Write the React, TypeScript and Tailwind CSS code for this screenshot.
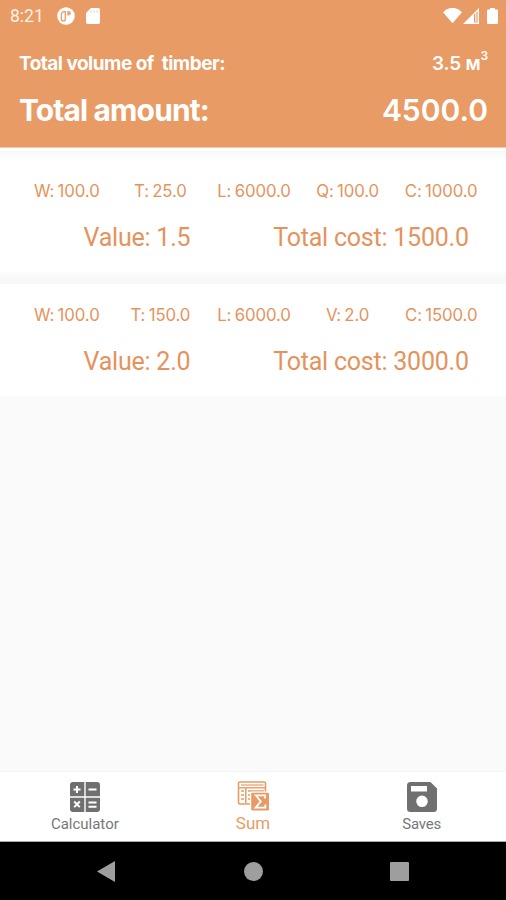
import React from "react";

type Entry = { cells: string[]; value: string; cost: string };

const entries: Entry[] = [
  { cells: ["W: 100.0", "T: 25.0", "L: 6000.0", "Q: 100.0", "C: 1000.0"], value: "Value: 1.5", cost: "Total cost: 1500.0" },
  { cells: ["W: 100.0", "T: 150.0", "L: 6000.0", "V: 2.0", "C: 1500.0"], value: "Value: 2.0", cost: "Total cost: 3000.0" },
];

function StatusBar() {
  return (
    <div className="flex h-8 items-center pl-[10px] pr-[8px]">
      <span className="w-[47px] font-['Roboto',sans-serif] text-[17.5px] leading-8 text-[#fff1e6]">8:21</span>
      <svg className="h-[18px] w-[18px]" viewBox="0 0 18 18">
        <circle cx="9" cy="9" r="8.8" fill="#fff" />
        <path d="M8.3 4.6H7a2.6 2.6 0 0 0-2.6 2.6V12a1.9 1.9 0 0 0 3.9 0z" fill="#fff" stroke="#e89b64" strokeWidth="1.3" />
        <path d="M10.2 4h1.4a2.3 2.3 0 0 1 0 4.6h-1.4z" fill="#eba878" />
      </svg>
      <svg className="ml-[11px] h-4 w-[14px]" viewBox="0 0 14 16">
        <path d="M5 0h7.3Q14 0 14 1.7v12.6q0 1.7-1.7 1.7H1.7Q0 16 0 14.3V5z" fill="#fff" />
        <path d="M5 2.5v2M8 2.5v2M11 2.5v2" stroke="#f3c5a3" strokeWidth="1" />
      </svg>
      <svg className="ml-auto h-4 w-[19px]" viewBox="0 0 19 16">
        <path d="M0 4.2Q4-.2 9.5-.2T19 4.2L9.5 15.2z" fill="#fff" />
      </svg>
      <svg className="ml-[1px] h-4 w-4" viewBox="0 0 16 16">
        <path d="M16 0v16H0z" fill="#fff" />
        <path d="M11 6.6l3.6-3v10.8H11z" fill="#e89b64" />
        <path d="M12.3 5h1.1v9h-1.1z" fill="#fff" />
      </svg>
      <svg className="ml-[8px] h-4 w-[11px]" viewBox="0 0 11 16">
        <path d="M3 0h5v1.6h2q1 0 1 1V15q0 1-1 1H1q-1 0-1-1V2.6q0-1 1-1h2z" fill="#fff" />
      </svg>
    </div>
  );
}

function EntryCard({ entry }: { entry: Entry }) {
  return (
    <section className="h-[112px] bg-white pl-[20px] pr-[18px] text-[#e5935c]">
      <div className="grid h-[62px] grid-cols-5 text-center font-['Inter',sans-serif] text-[16.8px] leading-[62px] tracking-[-0.1px] [word-spacing:-1.3px]">
        {entry.cells.map((c) => (
          <span key={c} className="whitespace-nowrap">{c}</span>
        ))}
      </div>
      <div className="grid grid-cols-2 text-center font-['Roboto',sans-serif] text-[25px] leading-[32px] tracking-[-0.22px]">
        <span>{entry.value}</span>
        <span className="whitespace-nowrap">{entry.cost}</span>
      </div>
    </section>
  );
}

function CalculatorIcon() {
  return (
    <svg className="h-[30px] w-[30px]" viewBox="0 0 30 30">
      <path d="M3 0h11.3v14.3H0V3q0-3 3-3zM15.7 0H27q3 0 3 3v11.3H15.7zM0 15.7h14.3V30H3q-3 0-3-3zM15.7 15.7H30V27q0 3-3 3H15.7z" fill="#707070" />
      <path d="M7 4v7M3.5 7.5h7M18.5 7.5h8M4.2 19.5l5.6 5.6M9.8 19.5l-5.6 5.6M18.5 20.5h8M18.5 24.7h8" stroke="#fff" strokeWidth="2" />
    </svg>
  );
}

function SumIcon() {
  return (
    <svg className="h-[30px] w-[32px]" viewBox="0 0 32 30">
      <rect x="1.5" y="1" width="27" height="22" rx="1.5" fill="#fff" stroke="#e89b64" strokeWidth="1.6" />
      <path d="M4 4h22.5" stroke="#efb58d" strokeWidth="1.6" />
      <path d="M2 6.8h26" stroke="#e89b64" strokeWidth="1.4" />
      <path d="M4 10h3M4 14h3M4 18h3M11 10h16M11 14h3M11 18h3M8.8 7v15" stroke="#e89b64" strokeWidth="1.5" />
      <rect x="13" y="10.6" width="19" height="19.4" rx="1" fill="#fff" />
      <rect x="14.2" y="11.8" width="17.8" height="17.8" rx="1" fill="#e89b64" />
      <path d="M28 17.4v-3h-9.2l5 6.1-5.2 6.1H28.4v-3" fill="none" stroke="#fff" strokeWidth="1.8" />
    </svg>
  );
}

function SaveIcon() {
  return (
    <svg className="h-[30px] w-[30px]" viewBox="0 0 30 30">
      <path fillRule="evenodd" d="M3.5 0h20L30 6.5v20q0 3.5-3.5 3.5h-23Q0 30 0 26.5v-23Q0 0 3.5 0zM4 4v5.5h16V4zM15 13.5a5.8 5.8 0 1 0 0 11.6 5.8 5.8 0 0 0 0-11.6z" fill="#707070" />
    </svg>
  );
}

export default function App() {
  return (
    <div className="flex h-[900px] w-[506px] flex-col overflow-hidden bg-[#fafafa]">
      <header className="h-[148px] border-b border-[#f3c9ab] bg-[#e89b64] font-['Inter',sans-serif] text-white">
        <StatusBar />
        <div className="flex h-[62px] items-center justify-between pl-[19px] pr-[18px] pt-[2px] text-[19px] font-bold leading-[60px]">
          <span className="whitespace-pre tracking-[-0.52px]">Total volume of  timber:</span>
          <span className="flex font-semibold tracking-[-0.2px]">3.5 м<span className="-translate-y-[8px] text-[12px]">3</span></span>
        </div>
        <div className="-mt-[1px] flex h-[34px] items-center justify-between pl-[19px] pr-[18px] text-[30px] font-bold">
          <span className="tracking-[-0.88px]">Total amount:</span>
          <span className="font-semibold">4500.0</span>
        </div>
      </header>
      <main className="flex-1">
        <div className="h-[3px] bg-white" />
        <div className="h-[9px] bg-linear-to-b from-[#f8f8f8] to-white" />
        <EntryCard entry={entries[0]} />
        <div className="h-[12px] bg-linear-to-b from-[#fcfcfc] to-[#f8f8f8] to-50%" />
        <EntryCard entry={entries[1]} />
      </main>
      <nav className="grid h-[71px] grid-cols-3 border-t border-b border-t-[#f4f4f4] border-b-[#aaa] bg-white font-['Roboto',sans-serif] text-[#777]">
        <div className="flex flex-col items-center pl-[1px] pt-[10px]">
          <CalculatorIcon />
          <span className="mt-[2px] text-[15px] leading-5">Calculator</span>
        </div>
        <div className="flex flex-col items-center pt-[9px] text-[#e89b64]">
          <SumIcon />
          <span className="text-[17px] leading-6">Sum</span>
        </div>
        <div className="flex flex-col items-center pt-[10px]">
          <SaveIcon />
          <span className="mt-[2px] text-[15px] leading-5 tracking-[-0.15px]">Saves</span>
        </div>
      </nav>
      <footer className="flex h-[58px] items-center bg-black pl-[97px]">
        <svg className="h-[21px] w-[18px]" viewBox="0 0 18 21"><path d="M18 0v21L0 10.5z" fill="#9e9e9e" /></svg>
        <div className="ml-[129px] h-[19px] w-[19px] rounded-full bg-[#9e9e9e]" />
        <div className="ml-[127px] h-[19px] w-[19px] rounded-[1px] bg-[#9e9e9e]" />
      </footer>
    </div>
  );
}
